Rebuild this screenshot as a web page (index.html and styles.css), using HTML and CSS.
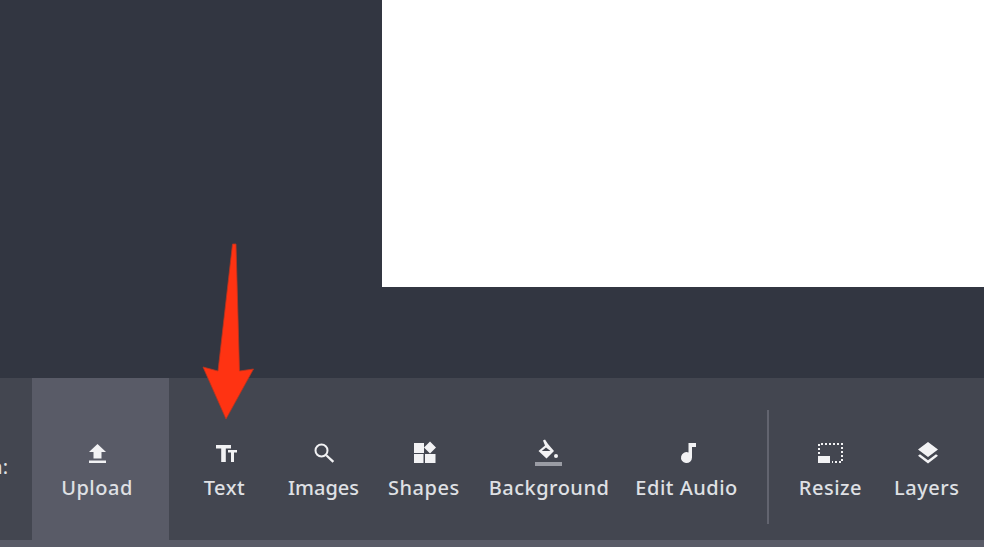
FILE: index.html
```html
<!DOCTYPE html>
<html lang="en">
<head>
    <meta charset="UTF-8">
    <meta name="viewport" content="width=device-width, initial-scale=1.0">
    <title>Editor</title>
    <link rel="stylesheet" href="styles.css">
</head>
<body>
    <!-- canvas area -->
    <div class="stage">
        <div class="canvas"></div>
    </div>

    <!-- bottom toolbar -->
    <div class="toolbar">
        <div class="edge"><span>n:</span></div>

        <div class="tab">
            <div class="tool">
                <svg class="icon" viewBox="0 0 28 28"><path d="M14.500 5L23 13h-4.500v6.500h-8V13H6zM6 21.500h17V24H6z"/></svg>
                <span class="label">Upload</span>
            </div>
        </div>

        <div class="tools">
            <div class="tool tool-text">
                <svg class="icon" viewBox="0 0 28 28"><path d="M5 6h15v3.500h-5.200V23h-4.600V9.500H5zM17 11h9v2.600h-3V23h-3V13.600h-3z"/></svg>
                <span class="label">Text</span>
            </div>
            <div class="tool tool-images">
                <svg class="icon" viewBox="0 0 28 28">
                    <circle class="lens" cx="11.500" cy="11.500" r="6"/>
                    <path d="M15.500 16.900l1.500-1.500 7.200 6.600-1.700 1.700z"/>
                </svg>
                <span class="label">Images</span>
            </div>
            <div class="tool">
                <svg class="icon" viewBox="0 0 28 28"><path d="M4 4h10v10H4zM20 2.500l6 6-6 6-6-6zM4 15h9.500v9H4zM15 15h10.500v9H15z"/></svg>
                <span class="label">Shapes</span>
            </div>
            <div class="tool">
                <svg class="icon" viewBox="0 0 28 28">
                    <path fill-rule="evenodd" d="M8 1.500L10 .500l3 4.500 6 7-7.500 7.500L3.500 12l6.500-5.500zM11 8.500L6.800 12h8.700z"/>
                    <circle cx="21" cy="17" r="2"/>
                    <rect class="bucket-bar" x="0" y="23" width="27" height="4"/>
                </svg>
                <span class="label">Background</span>
            </div>
            <div class="tool tool-audio">
                <svg class="icon" viewBox="0 0 28 28"><path d="M15.500 4H23v4h-4v10.500a5.500 5.500 0 1 1-3.500-5.100z"/></svg>
                <span class="label">Edit Audio</span>
            </div>
            <div class="divider"></div>
            <div class="tool">
                <svg class="icon" viewBox="0 0 28 28">
                    <path class="dots" d="M3 15V5h23v18h-10"/>
                    <rect x="2" y="17" width="12" height="7"/>
                </svg>
                <span class="label">Resize</span>
            </div>
            <div class="tool tool-layers">
                <svg class="icon" viewBox="0 0 28 28"><path d="M15 3l10 7.500L15 18 5 10.500zM7 15.200l8 6 8-6 2 1.600-10 7.700-10-7.700z"/></svg>
                <span class="label">Layers</span>
            </div>
        </div>
    </div>

    <!-- red arrow pointing at Text -->
    <svg class="arrow" viewBox="0 0 984 547">
        <path d="M232.500 244h3.500L239.500 371 253.500 369 226 419 203 367 218 371z"/>
    </svg>
</body>
</html>
```

FILE: styles.css
```css
body {
    margin: 0;
    height: 547px;
    overflow: hidden;
    font-family: "Noto Sans", "Open Sans", sans-serif;
    background-color: #323641;
}
.stage {
    height: 378px;
}
.canvas {
    height: 287px;
    margin-left: 382px;
    background-color: #ffffff;
}
.toolbar {
    display: flex;
    height: 169px;
    background-color: #595b67;
}
.edge {
    display: flex;
    justify-content: flex-end;
    width: 32px;
    height: 162px;
    overflow: hidden;
    background-color: #434650;
    color: #dfe0e4;
    font-size: 20px;
    line-height: 178px;
}
.edge span {
    margin-right: 24px;
    white-space: nowrap;
}
.tab {
    display: flex;
    justify-content: center;
    width: 130px;
    padding-right: 7px;
}
.tools {
    display: flex;
    flex: 1;
    gap: 29px;
    height: 162px;
    padding-left: 21px;
    background-color: #434650;
}
.tool {
    display: flex;
    flex-direction: column;
    align-items: center;
    padding-top: 61px;
}
.tool-text {
    min-width: 69px;
}
.tool-images .label {
    letter-spacing: 0;
}
.tool-audio {
    margin-left: -3px;
}
.tool-layers {
    margin-left: 3px;
}
.icon {
    width: 28px;
    height: 28px;
    fill: #f2f2f4;
}
.lens {
    fill: none;
    stroke: #f2f2f4;
    stroke-width: 2;
}
.bucket-bar {
    fill: #9a9ca4;
}
.dots {
    fill: none;
    stroke: #f2f2f4;
    stroke-width: 2;
    stroke-dasharray: 2 2;
}
.label {
    margin-top: 7px;
    color: #dfe0e4;
    font-size: 20px;
    font-weight: 500;
    letter-spacing: 0.5px;
    line-height: 28px;
    white-space: nowrap;
}
.divider {
    align-self: flex-start;
    width: 2px;
    height: 114px;
    margin-top: 32px;
    margin-right: 1px;
    background-color: #62646f;
}
.arrow {
    position: absolute;
    left: 0;
    top: 0;
    width: 984px;
    height: 547px;
}
.arrow path {
    fill: #ff3312;
    stroke: #b8351f;
    stroke-width: 0.800;
}
```
